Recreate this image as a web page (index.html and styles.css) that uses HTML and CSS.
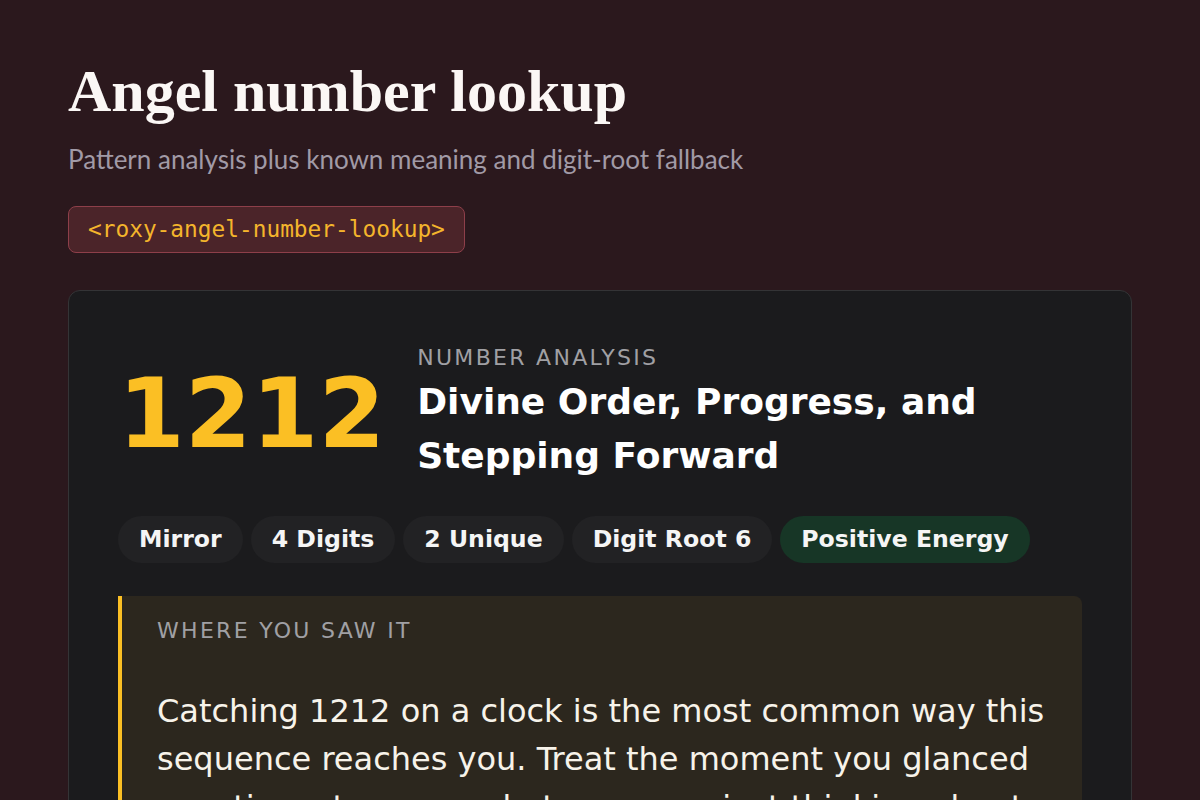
FILE: index.html
```html
<!DOCTYPE html>
<html lang="en">
<head>
  <meta charset="UTF-8" />
  <meta name="viewport" content="width=device-width, initial-scale=1.0" />
  <title>Angel number lookup</title>
  <link rel="stylesheet" href="styles.css">
</head>
<body>
  <main class="page">
    <header class="page-head">
      <h1>Angel number lookup</h1>
      <p class="subtitle">Pattern analysis plus known meaning and digit-root fallback</p>
      <code class="tag">&lt;roxy-angel-number-lookup&gt;</code>
    </header>

    <section class="card">
      <div class="hero">
        <div class="number">1212</div>
        <div class="hero-text">
          <div class="eyebrow">Number Analysis</div>
          <h2>Divine Order, Progress, and Stepping Forward</h2>
        </div>
      </div>

      <ul class="chips">
        <li class="chip">Mirror</li>
        <li class="chip">4 Digits</li>
        <li class="chip">2 Unique</li>
        <li class="chip">Digit Root 6</li>
        <li class="chip chip-positive">Positive Energy</li>
      </ul>

      <div class="context">
        <div class="eyebrow">Where you saw it</div>
        <p>Catching 1212 on a clock is the most common way this sequence reaches you. Treat the moment you glanced as a time stamp on what you were just thinking about.</p>
      </div>
    </section>
  </main>
</body>
</html>
```

FILE: styles.css
```css
body {
  margin: 0;
  background: #2b181d;
  color: #f5f5f5;
  font-family: "DejaVu Sans", sans-serif;
}
.page {
  padding: 58px 68px 40px;
}
h1 {
  margin: 0;
  font-family: "Liberation Serif", serif;
  font-weight: bold;
  font-size: 60px;
  line-height: 66px;
  color: #fbf7f5;
}
.subtitle {
  margin: 19px 0 31px;
  font-family: "Lato", sans-serif;
  font-size: 26px;
  line-height: 32px;
  color: #a19aa6;
}
.tag {
  display: inline-block;
  padding: 9px 19px;
  background: #4b2429;
  border: 1px solid #8e3f4a;
  border-radius: 8px;
  font-family: "DejaVu Sans Mono", monospace;
  font-size: 22.8px;
  line-height: 27px;
  color: #f4b52c;
}
.card {
  margin-top: 37px;
  padding: 53px 49px 48px;
  background: #1b1b1d;
  border: 1px solid #343436;
  border-radius: 12px;
}
.hero {
  display: flex;
  align-items: center;
  gap: 32px;
}
.number {
  font-size: 96px;
  font-weight: bold;
  line-height: 1;
  color: #fbbf24;
}
.eyebrow {
  font-size: 22px;
  line-height: 28px;
  letter-spacing: 2.3px;
  text-transform: uppercase;
  color: #a0a0a4;
}
h2 {
  margin: 3px 0 0;
  font-size: 36px;
  line-height: 54px;
  color: #ffffff;
}
.chips {
  display: flex;
  gap: 8px;
  margin: 33px 0 33px;
  padding: 0;
  list-style: none;
}
.chip {
  padding: 9px 21px;
  background: #222224;
  border-radius: 24px;
  font-size: 23.6px;
  font-weight: bold;
  line-height: 29px;
}
.chip-positive {
  background: #173626;
}
.context {
  padding: 21px 35px 24px;
  background: #2c271e;
  border-left: 4px solid #fbbf24;
  border-radius: 0 8px 8px 0;
}
.context p {
  margin: 42px 0 0;
  font-size: 32px;
  line-height: 48px;
  color: #f7f3ea;
}
```
